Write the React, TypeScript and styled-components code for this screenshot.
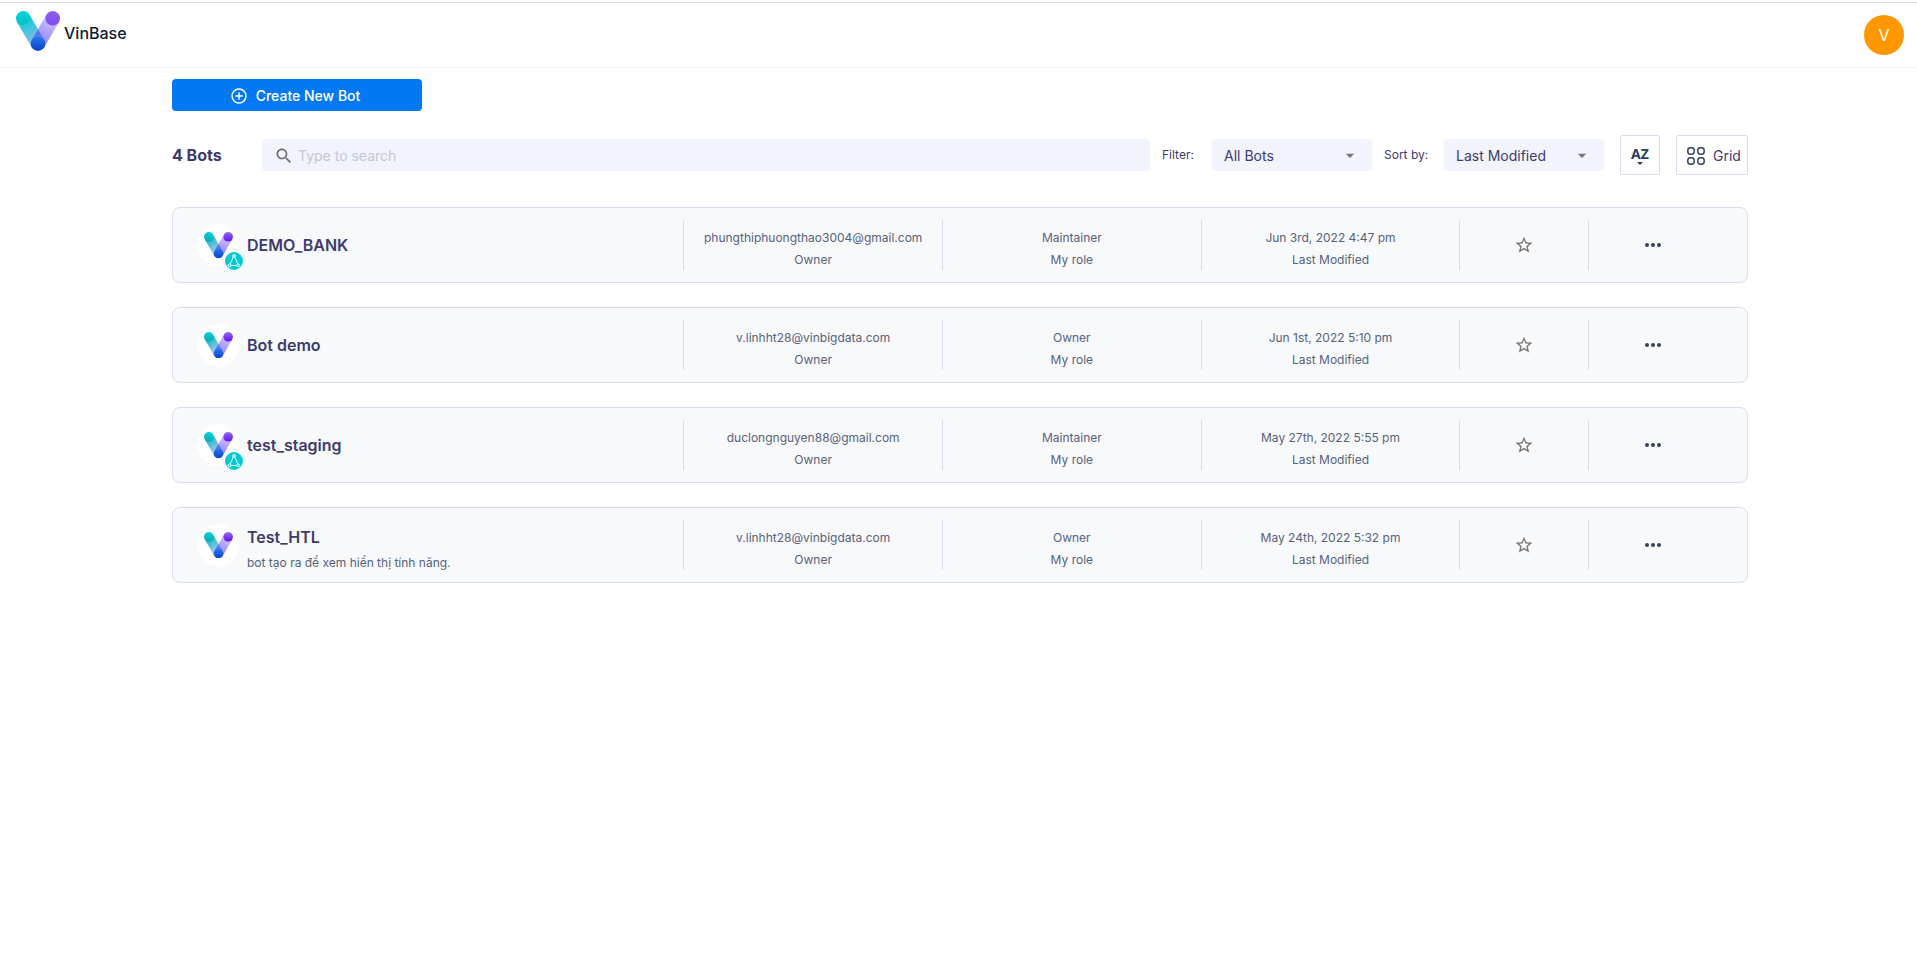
import React, { useId } from "react";
import styled, { createGlobalStyle } from "styled-components";

const colors = {
  heading: "#3d3b6e",
  text: "#56617c",
  line: "#d9dbeb",
  field: "#f1f4fc",
  card: "#f8f9fb",
  primary: "#0279f2",
  icon: "#34435e",
  muted: "#757575",
};

const GlobalStyle = createGlobalStyle`
  *, *::before, *::after { box-sizing: border-box; }
  body {
    margin: 0;
    background: #fff;
    color: ${colors.heading};
    font-family: Inter, "Noto Sans", sans-serif;
    font-size: 14px;
    line-height: 20px;
  }
  button, input, select { font: inherit; color: inherit; margin: 0; }
  svg { display: block; flex: none; }
`;

const Header = styled.header`
  display: flex;
  justify-content: space-between;
  align-items: flex-start;
  margin-top: 2px;
  height: 66px;
  padding: 8px 13px 0 16px;
  border-top: 1px solid #d9d9db;
  border-bottom: 1px solid #f3f3f4;
`;

const Brand = styled.a`
  display: flex;
  align-items: center;
  gap: 4px;
  color: #101a33;
  font-size: 16px;
  font-weight: 500;
  line-height: 24px;
  text-decoration: none;
`;

const BrandName = styled.span`
  padding-top: 4px;
`;

const ProfileButton = styled.button`
  width: 40px;
  height: 40px;
  margin-top: 4px;
  padding: 0;
  border: 0;
  border-radius: 50%;
  background: #ff9800;
  color: #fff;
  font-size: 16px;
  cursor: pointer;
`;

const Main = styled.main`
  padding: 11px 169px 40px 172px;
`;

const CreateButton = styled.button`
  display: flex;
  align-items: center;
  justify-content: center;
  gap: 8px;
  width: 250px;
  height: 32px;
  padding: 2px 4px 0 0;
  border: 0;
  border-radius: 4px;
  background: ${colors.primary};
  color: #fff;
  font-weight: 500;
  cursor: pointer;
`;

const Toolbar = styled.div`
  display: flex;
  align-items: center;
  margin: 24px 0 32px;
`;

const BotCount = styled.h1`
  width: 90px;
  margin: 0;
  font-size: 16px;
  font-weight: 700;
`;

const SearchBox = styled.label`
  display: flex;
  flex: 1;
  align-items: center;
  gap: 4px;
  height: 32px;
  padding: 2px 12px 0;
  border-radius: 4px;
  background: ${colors.field};
  color: #6e6e73;
`;

const SearchInput = styled.input`
  flex: 1;
  min-width: 0;
  height: 20px;
  padding: 0;
  border: 0;
  outline: 0;
  background: transparent;
  &::placeholder { color: #c3c6d1; opacity: 1; }
`;

const FieldLabel = styled.label`
  width: 50px;
  margin-left: 12px;
  font-size: 12px;
`;

const WideFieldLabel = styled(FieldLabel)`
  width: 60px;
`;

const SelectWrap = styled.div`
  display: grid;
  align-items: center;
  width: 160px;
  color: ${colors.muted};
  > * { grid-area: 1 / 1; }
  > svg { justify-self: end; margin-right: 12px; pointer-events: none; }
`;

const Select = styled.select`
  appearance: none;
  width: 100%;
  height: 32px;
  padding: 2px 32px 0 12px;
  border: 0;
  border-radius: 4px;
  background: ${colors.field};
  color: ${colors.heading};
`;

const OutlineButton = styled.button<{ $width: number }>`
  display: flex;
  align-items: center;
  gap: 8px;
  width: ${(p) => p.$width}px;
  height: 40px;
  margin-left: 16px;
  padding: 1px 10px 0;
  border: 1px solid ${colors.line};
  border-radius: 2px;
  background: #fff;
  cursor: pointer;
`;

const SortGlyph = styled.span`
  display: flex;
  flex-direction: column;
  align-items: center;
  color: #2c3e5a;
  font-family: "Noto Sans", sans-serif;
  font-weight: 700;
  line-height: 16px;
`;

const BotList = styled.ul`
  display: grid;
  gap: 24px;
  margin: 0;
  padding: 0;
  list-style: none;
`;

const BotCard = styled.li`
  display: grid;
  grid-template-columns: 511fr 259fr 259fr 259fr 129fr 129fr;
  align-items: center;
  height: 76px;
  padding-right: 30px;
  border: 1px solid ${colors.line};
  border-radius: 8px;
  background: ${colors.card};
`;

const BotIdentity = styled.div`
  display: flex;
  align-items: center;
  gap: 8px;
  min-width: 0;
  padding-left: 24px;
`;

const BotAvatar = styled.div`
  position: relative;
  display: grid;
  place-items: center;
  flex: none;
  width: 42px;
  height: 42px;
  border-radius: 50%;
  background: #fff;
`;

const Badge = styled.span`
  position: absolute;
  right: -6px;
  bottom: -6px;
  display: grid;
  place-items: center;
  width: 22px;
  height: 22px;
  border: 2px solid #fff;
  border-radius: 50%;
  background: #00c9d2;
`;

const BotTitle = styled.div<{ $described: boolean }>`
  padding-top: ${(p) => (p.$described ? 8 : 0)}px;
`;

const BotName = styled.h2`
  margin: 0;
  font-size: 16px;
  font-weight: 600;
  line-height: 24px;
`;

const BotDescription = styled.p`
  margin: 4px 0 0;
  color: ${colors.text};
  font-size: 12px;
`;

const Cell = styled.div`
  display: flex;
  flex-direction: column;
  align-items: center;
  justify-content: center;
  height: 50px;
  border-left: 1px solid ${colors.line};
`;

const TextCell = styled(Cell)`
  padding-top: 8px;
  color: ${colors.text};
  font-size: 12px;
  line-height: 22px;
`;

const IconButton = styled.button`
  display: grid;
  place-items: center;
  width: 32px;
  height: 32px;
  padding: 0;
  border: 0;
  background: transparent;
  color: ${colors.muted};
  cursor: pointer;
`;

function Logo({ width, vivid = false }: { width: number; vivid?: boolean }) {
  const id = useId();
  return (
    <svg width={width} height={(width * 40) / 44} viewBox="0 0 44 40" aria-hidden="true">
      <defs>
        <linearGradient id={id + "l"} gradientUnits="userSpaceOnUse" x1="7" y1="7" x2="22" y2="33">
          <stop offset="0" stopColor={vivid ? "#12b3c2" : "#0acdd6"} />
          <stop offset="1" stopColor={vivid ? "#b5cdf5" : "#97b9e6"} />
        </linearGradient>
        <linearGradient id={id + "r"} gradientUnits="userSpaceOnUse" x1="37" y1="7" x2="22" y2="33">
          <stop offset="0" stopColor={vivid ? "#d9c4fb" : "#d3c2fc"} />
          <stop offset="1" stopColor="#8583fa" />
        </linearGradient>
        <linearGradient id={id + "a"} x1="0" y1="0" x2="0" y2="1">
          <stop offset="0" stopColor="#04d3dc" />
          <stop offset="1" stopColor={vivid ? "#06a9b0" : "#05bfc4"} />
        </linearGradient>
        <linearGradient id={id + "b"} x1="0" y1="0" x2="0" y2="1">
          <stop offset="0" stopColor={vivid ? "#9569ec" : "#8a63ea"} />
          <stop offset="1" stopColor={vivid ? "#6410f8" : "#8148f2"} />
        </linearGradient>
        <linearGradient id={id + "c"} x1="0" y1="0" x2="0" y2="1">
          <stop offset="0" stopColor="#2d74ef" />
          <stop offset="1" stopColor="#0843c8" />
        </linearGradient>
      </defs>
      <path d="M7.3 7.3 22 32.7" stroke={`url(#${id}l)`} strokeWidth="14.6" />
      <path d="M36.7 7.3 22 32.7" stroke={`url(#${id}r)`} strokeWidth="14.6" />
      <path d="M22 18.5 28.3 29 22 33 15.7 29Z" fill="#4b72e4" opacity="0.85" />
      <circle cx="7.3" cy="7.3" r="7.3" fill={`url(#${id}a)`} />
      <circle cx="36.7" cy="7.3" r="7.3" fill={`url(#${id}b)`} />
      <circle cx="22" cy="32.7" r="7.3" fill={`url(#${id}c)`} />
      {!vivid && (
        <g fill="none" strokeWidth="0.5" opacity="0.7">
          <path d="M1 11a7.3 7.3 0 0 0 13-1" stroke="#4fe0e4" />
          <path d="M30 10a7.3 7.3 0 0 0 13 1" stroke="#b18bf8" />
          <path d="M15.5 29a7.3 7.3 0 0 1 13 0" stroke="#67a0fb" />
        </g>
      )}
    </svg>
  );
}

const PlusCircle = () => (
  <svg width="18" height="18" viewBox="0 0 18 18" fill="none" stroke="currentColor" strokeWidth="1.4" aria-hidden="true">
    <circle cx="9" cy="9" r="7" />
    <path d="M9 5.3v7.4M5.3 9h7.4" />
  </svg>
);

const SearchIcon = () => (
  <svg width="20" height="20" viewBox="0 0 24 24" fill="currentColor" aria-hidden="true">
    <path d="M15.5 14h-.79l-.28-.27C15.41 12.59 16 11.11 16 9.5 16 5.91 13.09 3 9.5 3S3 5.91 3 9.5 5.91 16 9.5 16c1.61 0 3.09-.59 4.23-1.57l.27.28v.79l5 4.99L20.49 19l-4.99-5zm-6 0C7.01 14 5 11.99 5 9.5S7.01 5 9.5 5 14 7.01 14 9.5 11.99 14 9.5 14z" />
  </svg>
);

const CaretIcon = () => (
  <svg width="20" height="20" viewBox="0 0 24 24" fill="currentColor" aria-hidden="true">
    <path d="m7 10.500 5 5 5-5z" />
  </svg>
);

const GridIcon = () => (
  <svg width="18" height="18" viewBox="0 0 18 18" fill="none" stroke={colors.icon} strokeWidth="1.5" aria-hidden="true">
    <rect x="0.8" y="0.8" width="6.4" height="6.4" rx="2.6" />
    <rect x="10.8" y="0.8" width="6.4" height="6.4" rx="2.6" />
    <rect x="0.8" y="10.8" width="6.4" height="6.4" rx="2.6" />
    <rect x="10.8" y="10.8" width="6.4" height="6.4" rx="2.6" />
  </svg>
);

const NetworkIcon = () => (
  <svg width="14" height="14" viewBox="0 0 14 14" fill="none" stroke="#fff" strokeWidth="1" aria-hidden="true">
    <circle cx="7" cy="2" r="1.4" />
    <circle cx="2.6" cy="11.400" r="1.4" />
    <circle cx="11.4" cy="11.400" r="1.4" />
    <path d="M6.2 3.300 3.100 10M7.800 3.300 10.900 10M4.100 11.400h5.800" />
  </svg>
);

const StarIcon = () => (
  <svg width="20" height="20" viewBox="0 0 24 24" fill="currentColor" aria-hidden="true">
    <path d="m22 9.24-7.19-.62L12 2 9.19 8.63 2 9.24l5.46 4.73L5.82 21 12 17.27 18.18 21l-1.63-7.03L22 9.24zM12 15.4l-3.76 2.27 1-4.28-3.32-2.88 4.38-.38L12 6.1l1.71 4.04 4.38.38-3.32 2.88 1 4.28L12 15.4z" />
  </svg>
);

const MoreIcon = () => (
  <svg width="16" height="4" viewBox="0 0 16 4" fill={colors.icon} aria-hidden="true">
    <circle cx="2" cy="2" r="2" />
    <circle cx="8" cy="2" r="2" />
    <circle cx="14" cy="2" r="2" />
  </svg>
);

type Bot = {
  name: string;
  description?: string;
  owner: string;
  role: string;
  modified: string;
  shared?: boolean;
};

const bots: Bot[] = [
  { name: "DEMO_BANK", owner: "phungthiphuongthao3004@gmail.com", role: "Maintainer", modified: "Jun 3rd, 2022 4:47 pm", shared: true },
  { name: "Bot demo", owner: "v.linhht28@vinbigdata.com", role: "Owner", modified: "Jun 1st, 2022 5:10 pm" },
  { name: "test_staging", owner: "duclongnguyen88@gmail.com", role: "Maintainer", modified: "May 27th, 2022 5:55 pm", shared: true },
  { name: "Test_HTL", description: "bot tạo ra để xem hiển thị tính năng.", owner: "v.linhht28@vinbigdata.com", role: "Owner", modified: "May 24th, 2022 5:32 pm" },
];

function BotRow({ bot }: { bot: Bot }) {
  return (
    <BotCard>
      <BotIdentity>
        <BotAvatar>
          <Logo width={29} vivid />
          {bot.shared && (
            <Badge>
              <NetworkIcon />
            </Badge>
          )}
        </BotAvatar>
        <BotTitle $described={Boolean(bot.description)}>
          <BotName>{bot.name}</BotName>
          {bot.description && <BotDescription>{bot.description}</BotDescription>}
        </BotTitle>
      </BotIdentity>
      <TextCell>
        <span>{bot.owner}</span>
        <span>Owner</span>
      </TextCell>
      <TextCell>
        <span>{bot.role}</span>
        <span>My role</span>
      </TextCell>
      <TextCell>
        <span>{bot.modified}</span>
        <span>Last Modified</span>
      </TextCell>
      <Cell>
        <IconButton type="button" aria-label={`Favourite ${bot.name}`}>
          <StarIcon />
        </IconButton>
      </Cell>
      <Cell>
        <IconButton type="button" aria-label={`More actions for ${bot.name}`}>
          <MoreIcon />
        </IconButton>
      </Cell>
    </BotCard>
  );
}

export default function App() {
  return (
    <>
      <GlobalStyle />
      <Header>
        <Brand href="#">
          <Logo width={44} />
          <BrandName>VinBase</BrandName>
        </Brand>
        <ProfileButton type="button">V</ProfileButton>
      </Header>
      <Main>
        <CreateButton type="button">
          <PlusCircle />
          Create New Bot
        </CreateButton>
        <Toolbar>
          <BotCount>{bots.length} Bots</BotCount>
          <SearchBox>
            <SearchIcon />
            <SearchInput type="text" placeholder="Type to search" aria-label="Search bots" />
          </SearchBox>
          <FieldLabel htmlFor="filter">Filter:</FieldLabel>
          <SelectWrap>
            <Select id="filter">
              <option>All Bots</option>
            </Select>
            <CaretIcon />
          </SelectWrap>
          <WideFieldLabel htmlFor="sort">Sort by:</WideFieldLabel>
          <SelectWrap>
            <Select id="sort">
              <option>Last Modified</option>
            </Select>
            <CaretIcon />
          </SelectWrap>
          <OutlineButton type="button" $width={40}>
            <SortGlyph>
              AZ
              <svg width="6" height="3" viewBox="0 0 6 3" fill="currentColor" aria-hidden="true">
                <path d="M0 0h6L3 3z" />
              </svg>
            </SortGlyph>
          </OutlineButton>
          <OutlineButton type="button" $width={72}>
            <GridIcon />
            Grid
          </OutlineButton>
        </Toolbar>
        <BotList>
          {bots.map((bot) => (
            <BotRow key={bot.name} bot={bot} />
          ))}
        </BotList>
      </Main>
    </>
  );
}
